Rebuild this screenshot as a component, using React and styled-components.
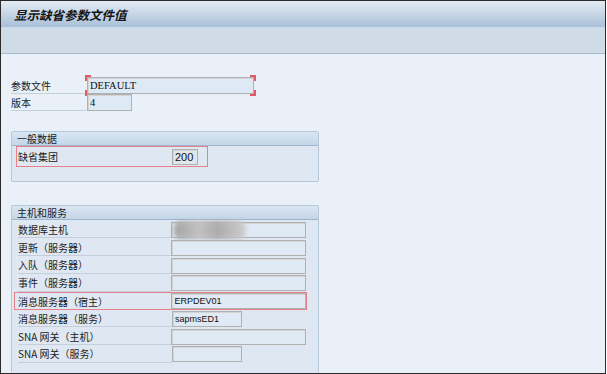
import styled, { createGlobalStyle } from 'styled-components';

const GlobalStyle = createGlobalStyle`
  html, body {
    margin: 0;
    padding: 0;
    background: #ffffff;
  }
  body {
    font-family: "Noto Sans CJK SC", "Liberation Sans", sans-serif;
  }
`;

const Frame = styled.div`
  width: 606px;
  height: 374px;
  box-sizing: border-box;
  border: 1px solid #2b2b2b;
  background: #e9f0f7;
  overflow: hidden;
  display: flex;
  flex-direction: column;
`;

const TitleBar = styled.div`
  height: 26px;
  display: flex;
  align-items: center;
  padding-left: 13px;
  background: linear-gradient(180deg, #e4ebf3 0%, #c9d8e7 45%, #a9c0d8 100%);
  font-size: 12.5px;
  font-weight: bold;
  font-style: italic;
  color: #151515;
`;

const Toolbar = styled.div`
  height: 26px;
  background: #cfdbe6;
  border-bottom: 1px solid #a9bccf;
`;

const Content = styled.div`
  flex: 1;
  display: flex;
  flex-direction: column;
  padding: 23px 0 0 10px;
`;

const TopForm = styled.div`
  display: flex;
  flex-direction: column;
  margin-bottom: 20px;
`;

const TopRow = styled.div`
  display: flex;
  align-items: flex-start;
  height: 17px;
`;

const Label = styled.div`
  box-sizing: border-box;
  width: ${(p) => p.w}px;
  height: 100%;
  padding-left: ${(p) => p.pad || 0}px;
  display: flex;
  align-items: center;
  font-size: 10px;
  color: #1c1c1c;
  white-space: nowrap;
  border-bottom: ${(p) => (p.line ? '1px solid #c5cfd9' : 'none')};
  margin-right: ${(p) => p.gap || 0}px;
`;

const LabelText = styled.span`
  margin-left: ${(p) => p.indent || 0}px;
  border-bottom: ${(p) => (p.line ? '1px solid #c5cfd9' : 'none')};
  flex: 1;
  height: 100%;
  display: flex;
  align-items: center;
`;

const Field = styled.div`
  position: relative;
  box-sizing: border-box;
  width: ${(p) => p.w}px;
  height: ${(p) => p.h || 16}px;
  border: 1px solid #b0b0b0;
  box-shadow: inset 1px 1px 0 #d4d4d4;
  background: ${(p) => p.bg || '#e0eaf4'};
  display: flex;
  align-items: center;
  padding-left: 2px;
  font-family: ${(p) => (p.serif ? '"Liberation Serif", serif' : '"Liberation Sans", sans-serif')};
  font-size: ${(p) => p.fs || 9}px;
  color: #111;
  white-space: nowrap;
`;

const Corner = styled.span`
  position: absolute;
  width: 4px;
  height: 4px;
  ${(p) => (p.top ? 'top: -3px;' : 'bottom: -3px;')}
  ${(p) => (p.left ? 'left: -3px;' : 'right: -3px;')}
  ${(p) => (p.top ? 'border-top: 2px solid #e25a63;' : 'border-bottom: 2px solid #e25a63;')}
  ${(p) => (p.left ? 'border-left: 2px solid #e25a63;' : 'border-right: 2px solid #e25a63;')}
`;

const Blur = styled.span`
  position: absolute;
  left: 2px;
  top: -2px;
  width: 72px;
  height: 18px;
  background: linear-gradient(90deg, #a4a4a4, #c2c2c2 35%, #acacac 60%, #cdcdcd);
  filter: blur(2px);
  border-radius: 7px;
`;

const Group = styled.div`
  width: 308px;
  box-sizing: border-box;
  border: 1px solid #b5c8da;
  border-radius: 2px;
  background: #dfe8f2;
  margin-bottom: ${(p) => p.mb || 0}px;
  ${(p) => (p.grow ? 'flex: 1; border-bottom: none;' : '')}
`;

const GroupHeader = styled.div`
  height: 13px;
  display: flex;
  align-items: center;
  padding-left: 5px;
  background: linear-gradient(180deg, #dae6f2 0%, #c4d6e8 100%);
  border-bottom: 1px solid #9db5cd;
  font-size: 10px;
  color: #1c1c1c;
`;

const GroupBody = styled.div`
  display: flex;
  flex-direction: column;
  padding: ${(p) => p.pad};
`;

const Row = styled.div`
  box-sizing: border-box;
  display: flex;
  align-items: center;
  width: ${(p) => p.w}px;
  height: ${(p) => p.h}px;
  border: 1px solid ${(p) => (p.hl ? '#e8808a' : 'transparent')};
`;

const hosts = [
  { label: '数据库主机', w: 135, blur: true },
  { label: '更新（服务器）', w: 135 },
  { label: '入队（服务器）', w: 135 },
  { label: '事件（服务器）', w: 135 },
  { label: '消息服务器（宿主）', w: 135, value: 'ERPDEV01', hl: true },
  { label: '消息服务器（服务）', w: 70, value: 'sapmsED1' },
  { label: 'SNA 网关（主机）', w: 135 },
  { label: 'SNA 网关（服务）', w: 70 },
];

export default function App() {
  return (
    <>
      <GlobalStyle />
      <Frame>
        <TitleBar>显示缺省参数文件值</TitleBar>
        <Toolbar />
        <Content>
          <TopForm>
            <TopRow>
              <Label w={75} gap={1} line>参数文件</Label>
              <Field w={167} h={17} serif fs={10.5} bg="#dde9f4">
                DEFAULT
                <Corner top left />
                <Corner top />
                <Corner left />
                <Corner />
              </Field>
            </TopRow>
            <TopRow>
              <Label w={75} gap={1} line>版本</Label>
              <Field w={45} h={17} serif fs={10.5} bg="#dde9f4">4</Field>
            </TopRow>
          </TopForm>

          <Group mb={23}>
            <GroupHeader>一般数据</GroupHeader>
            <GroupBody pad="0 0 14px 4px">
              <Row w={192} h={21} hl>
                <Label w={155} pad={1}>缺省集团</Label>
                <Field w={26} h={16} fs={11} bg="#dfe6ec">200</Field>
              </Row>
            </GroupBody>
          </Group>

          <Group grow>
            <GroupHeader>主机和服务</GroupHeader>
            <GroupBody pad="1px 0 0 2px">
              {hosts.map((h) => (
                <Row key={h.label} w={293} h={17.8} hl={h.hl}>
                  <Label w={157}>
                    <LabelText indent={3} line={!h.hl}>{h.label}</LabelText>
                  </Label>
                  <Field w={h.w} h={16}>
                    {h.blur && <Blur />}
                    {h.value}
                  </Field>
                </Row>
              ))}
            </GroupBody>
          </Group>
        </Content>
      </Frame>
    </>
  );
}
